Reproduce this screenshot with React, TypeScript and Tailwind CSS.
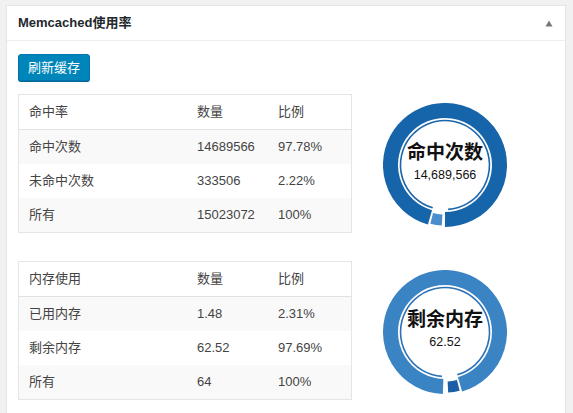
import React from "react";

const FONT = '"Liberation Sans", "Noto Sans CJK SC", sans-serif';

function pt(c: number, r: number, deg: number): [number, number] {
  const a = (deg * Math.PI) / 180;
  return [c + r * Math.sin(a), c - r * Math.cos(a)];
}

function arc(c: number, r: number, a1: number, a2: number): string {
  const [x1, y1] = pt(c, r, a1);
  const [x2, y2] = pt(c, r, a2);
  const large = a2 - a1 > 180 ? 1 : 0;
  return `M ${x1.toFixed(2)} ${y1.toFixed(2)} A ${r} ${r} 0 ${large} 1 ${x2.toFixed(2)} ${y2.toFixed(2)}`;
}

type DonutProps = {
  title: string;
  value: string;
  big: string;
  small: string;
  thin: string;
  bigArc: [number, number];
  smallArc: [number, number];
  thinArc: [number, number];
};

function Donut(p: DonutProps) {
  const c = 62;
  return (
    <div className="relative w-[124px] h-[124px]">
      <svg width="124" height="124" viewBox="0 0 124 124">
        <path d={arc(c, 54.5, p.bigArc[0], p.bigArc[1])} fill="none" stroke={p.big} strokeWidth="15" />
        <path d={arc(c, 55, p.smallArc[0], p.smallArc[1])} fill="none" stroke={p.small} strokeWidth="11" />
        <path d={arc(c, 44.5, p.thinArc[0], p.thinArc[1])} fill="none" stroke={p.thin} strokeWidth="1.6" />
      </svg>
      <div className="absolute inset-0 flex flex-col items-center pt-[38px]" style={{ fontFamily: FONT }}>
        <div className="text-[19px] leading-[24px] font-bold text-[#111]">{p.title}</div>
        <div className="mt-[2px] text-[12.5px] leading-[16px] text-[#111]">{p.value}</div>
      </div>
    </div>
  );
}

function Table({ head, rows }: { head: string[]; rows: string[][] }) {
  return (
    <div className="w-[334px] border border-[#e5e5e5] text-[13px] text-[#444]" style={{ fontFamily: FONT }}>
      <div className="grid grid-cols-[168px_81px_83px] h-[35px] items-center border-b border-[#e1e1e1] bg-white">
        {head.map((h, i) => (
          <div key={i} className="pl-[10px]">{h}</div>
        ))}
      </div>
      {rows.map((r, ri) => (
        <div
          key={ri}
          className={
            "grid grid-cols-[168px_81px_83px] h-[34px] items-center " +
            (ri % 2 === 0 ? "bg-[#f9f9f9]" : "bg-white")
          }
        >
          {r.map((v, i) => (
            <div key={i} className="pl-[10px]">{v}</div>
          ))}
        </div>
      ))}
    </div>
  );
}

export default function App() {
  return (
    <div className="w-[573px] h-[413px] overflow-hidden bg-[#f1f1f1]" style={{ fontFamily: FONT }}>
      <div className="ml-[6px] mt-[5px] w-[560px] h-[420px] bg-white border border-[#e5e5e5] shadow-[0_1px_1px_rgba(0,0,0,0.04)]">
        <div className="h-[35px] border-b border-[#eeeeee] pl-[11px] pr-[12px] flex items-center justify-between">
          <div className="text-[13px] font-bold text-[#23282d]">Memcached使用率</div>
          <svg width="8" height="7" viewBox="0 0 8 7">
            <polygon points="4,0.5 7.5,6.5 0.5,6.5" fill="#72777c" />
          </svg>
        </div>
        <div className="px-[11px] pt-[13px]">
          <button className="h-[27px] px-[9px] rounded-[3px] bg-[#0085ba] border border-[#0073aa] shadow-[0_1px_0_#006799] text-white text-[13px] leading-[25px]">
            刷新缓存
          </button>
          <div className="mt-[13px] flex">
            <Table
              head={["命中率", "数量", "比例"]}
              rows={[
                ["命中次数", "14689566", "97.78%"],
                ["未命中次数", "333506", "2.22%"],
                ["所有", "15023072", "100%"],
              ]}
            />
            <div className="ml-[31px] mt-[9px]">
              <Donut
                title="命中次数"
                value="14,689,566"
                big="#1664aa"
                small="#4a8fcc"
                thin="#1a66ac"
                bigArc={[196, 540]}
                smallArc={[183, 194]}
                thinArc={[196, 536]}
              />
            </div>
          </div>
          <div className="mt-[28px] flex">
            <Table
              head={["内存使用", "数量", "比例"]}
              rows={[
                ["已用内存", "1.48", "2.31%"],
                ["剩余内存", "62.52", "97.69%"],
                ["所有", "64", "100%"],
              ]}
            />
            <div className="ml-[31px] mt-[9px]">
              <Donut
                title="剩余内存"
                value="62.52"
                big="#3a84c4"
                small="#1b5ea5"
                thin="#2c71b6"
                bigArc={[182, 524]}
                smallArc={[166, 177]}
                thinArc={[184, 524]}
              />
            </div>
          </div>
        </div>
      </div>
    </div>
  );
}
